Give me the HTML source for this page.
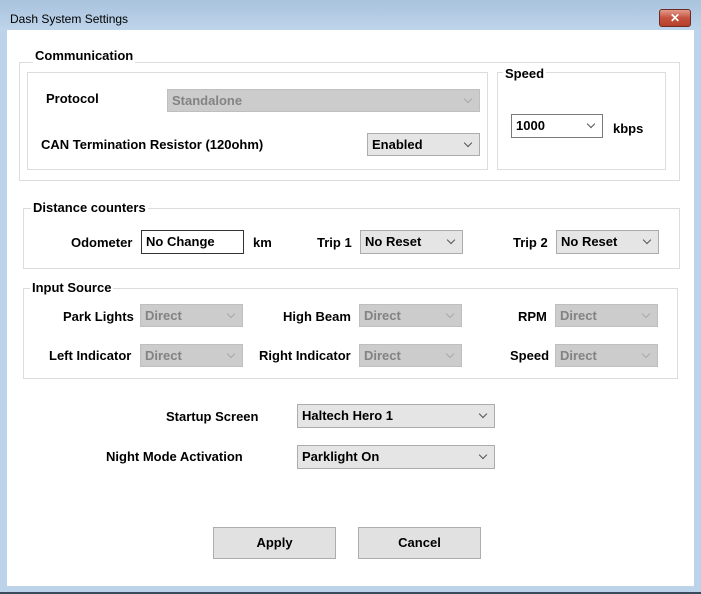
<!DOCTYPE html><html><head><style>
*{margin:0;padding:0;box-sizing:border-box}
body{width:701px;height:594px;overflow:hidden;font-family:"Liberation Sans",Arial,sans-serif;background:#bcd3ea;position:relative}
.a{position:absolute}
.tb{left:0;top:0;width:701px;height:30px;background:linear-gradient(#a9c3dd,#bdd4ea)}
.content{left:7px;top:30px;width:687px;height:556px;background:#fff}
.bot{left:0;top:592px;width:701px;height:2px;background:#3a4a5a}
.grp{border:1px solid #dcdcdc}
.gl{background:#fff;font-weight:bold;font-size:13px;padding:0 2px;line-height:15px}
.l{font-weight:bold;font-size:13px;line-height:15px;white-space:nowrap;color:#000}
.cb{background:#e5e5e5;border:1px solid #acacac;font-weight:bold;font-size:13px;padding-left:4px;line-height:22px}
.cb::after{content:"";position:absolute;right:8px;top:6px;width:5px;height:5px;border-right:1px solid #555;border-bottom:1px solid #555;transform:rotate(45deg)}
.dis{background:#cccccc;border-color:#bfbfbf;color:#838383}
.dis::after{border-color:#aaa}
.wh{background:#fff;border-color:#7a7a7a}
.nc::after{display:none}
.btn{background:#e1e1e1;border:1px solid #adadad;font-weight:bold;font-size:13px;text-align:center;line-height:30px}
</style></head><body>
<div class="a tb"></div>
<div class="a l" style="left:10px;top:12px;font-weight:normal;font-size:12px">Dash System Settings</div>
<div class="a" style="left:659px;top:9px;width:32px;height:18px;border:1px solid #6b2a24;border-radius:3px;background:linear-gradient(#e49b8c,#c4523e 50%,#b8402c);color:#fff;font-weight:bold;font-size:12px;text-align:center;line-height:16px">✕</div>
<div class="a content"></div>
<div class="a bot"></div>

<div class="a grp" style="left:19px;top:62px;width:661px;height:119px"></div>
<div class="a gl" style="left:33px;top:48px">Communication</div>
<div class="a grp" style="left:27px;top:72px;width:461px;height:98px"></div>
<div class="a grp" style="left:497px;top:72px;width:169px;height:98px"></div>
<div class="a gl" style="left:503px;top:66px">Speed</div>
<div class="a l" style="left:46px;top:91px">Protocol</div>
<div class="a cb dis" style="left:167px;top:89px;width:313px;height:23px">Standalone</div>
<div class="a l" style="left:41px;top:137px">CAN Termination Resistor (120ohm)</div>
<div class="a cb" style="left:367px;top:133px;width:113px;height:23px">Enabled</div>
<div class="a cb wh" style="left:511px;top:114px;width:92px;height:24px">1000</div>
<div class="a l" style="left:613px;top:121px">kbps</div>

<div class="a grp" style="left:23px;top:208px;width:657px;height:61px"></div>
<div class="a gl" style="left:31px;top:200px">Distance counters</div>
<div class="a l" style="left:71px;top:235px">Odometer</div>
<div class="a cb wh nc" style="left:141px;top:230px;width:103px;height:24px;border-color:#333">No Change</div>
<div class="a l" style="left:253px;top:235px">km</div>
<div class="a l" style="left:317px;top:235px">Trip 1</div>
<div class="a cb" style="left:360px;top:230px;width:103px;height:24px">No Reset</div>
<div class="a l" style="left:513px;top:235px">Trip 2</div>
<div class="a cb" style="left:556px;top:230px;width:103px;height:24px">No Reset</div>

<div class="a grp" style="left:23px;top:288px;width:655px;height:91px"></div>
<div class="a gl" style="left:30px;top:280px">Input Source</div>
<div class="a l" style="left:63px;top:309px">Park Lights</div>
<div class="a cb dis" style="left:140px;top:304px;width:103px;height:23px">Direct</div>
<div class="a l" style="left:283px;top:309px">High Beam</div>
<div class="a cb dis" style="left:359px;top:304px;width:103px;height:23px">Direct</div>
<div class="a l" style="left:518px;top:309px">RPM</div>
<div class="a cb dis" style="left:555px;top:304px;width:103px;height:23px">Direct</div>
<div class="a l" style="left:49px;top:348px">Left Indicator</div>
<div class="a cb dis" style="left:140px;top:344px;width:103px;height:23px">Direct</div>
<div class="a l" style="left:259px;top:348px">Right Indicator</div>
<div class="a cb dis" style="left:359px;top:344px;width:103px;height:23px">Direct</div>
<div class="a l" style="left:510px;top:348px">Speed</div>
<div class="a cb dis" style="left:555px;top:344px;width:103px;height:23px">Direct</div>

<div class="a l" style="left:166px;top:409px">Startup Screen</div>
<div class="a cb" style="left:297px;top:404px;width:198px;height:24px">Haltech Hero 1</div>
<div class="a l" style="left:106px;top:449px">Night Mode Activation</div>
<div class="a cb" style="left:297px;top:445px;width:198px;height:24px">Parklight On</div>

<div class="a btn" style="left:213px;top:527px;width:123px;height:32px">Apply</div>
<div class="a btn" style="left:358px;top:527px;width:123px;height:32px">Cancel</div>
</body></html>
